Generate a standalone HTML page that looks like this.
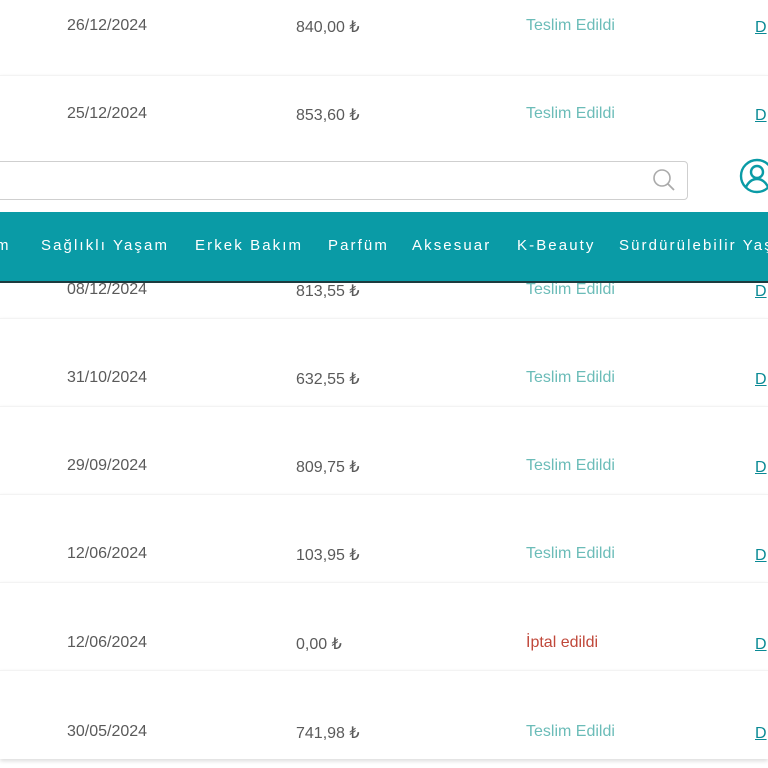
<!DOCTYPE html>
<html><head><meta charset="utf-8"><style>
body{margin:0;width:768px;height:768px;overflow:hidden;background:#fff;font-family:"Liberation Sans",sans-serif;position:relative}
.row{position:absolute;left:0;width:768px;height:88px;background:#fff;box-shadow:0 2px 4px rgba(0,0,0,.14);border-top:1px solid #f3f3f3}
.row span{position:absolute;font-size:16px;color:#5a5a5a}
.d{left:67px}.p{left:296px}.s{left:526px;color:#6bbcb8!important}.x{color:#c0483a!important;left:526px}
.l{left:755px;color:#0a8a95!important;text-decoration:underline}
.hdr{position:absolute;left:0;top:140px;width:768px;height:72px;background:#fff}
.search{position:absolute;left:-10px;top:161px;width:696px;height:37px;border:1px solid #cfcfcf;border-radius:4px;background:#fff}
.nav{position:absolute;left:0;top:212px;width:768px;height:69px;background:#0a9ba6;border-bottom:2px solid #1d3b3e}
.nav span{position:absolute;top:25px;color:#fff;font-size:15px;letter-spacing:2.1px;white-space:nowrap}
</style></head><body>
<div class="row" style="top:-12px"><span class="d" style="top:28px">26/12/2024</span><span class="p" style="top:28px">840,00 ₺</span><span class="s" style="top:28px">Teslim Edildi</span><span class="l" style="top:30px">D</span></div>
<div class="row" style="top:75px"><span class="d" style="top:29px">25/12/2024</span><span class="p" style="top:29px">853,60 ₺</span><span class="s" style="top:29px">Teslim Edildi</span><span class="l" style="top:31px">D</span></div>
<div class="row" style="top:230px"><span class="d" style="top:50px">08/12/2024</span><span class="p" style="top:50px">813,55 ₺</span><span class="s" style="top:50px">Teslim Edildi</span><span class="l" style="top:52px">D</span></div>
<div class="row" style="top:318px"><span class="d" style="top:50px">31/10/2024</span><span class="p" style="top:50px">632,55 ₺</span><span class="s" style="top:50px">Teslim Edildi</span><span class="l" style="top:52px">D</span></div>
<div class="row" style="top:406px"><span class="d" style="top:50px">29/09/2024</span><span class="p" style="top:50px">809,75 ₺</span><span class="s" style="top:50px">Teslim Edildi</span><span class="l" style="top:52px">D</span></div>
<div class="row" style="top:494px"><span class="d" style="top:50px">12/06/2024</span><span class="p" style="top:50px">103,95 ₺</span><span class="s" style="top:50px">Teslim Edildi</span><span class="l" style="top:52px">D</span></div>
<div class="row" style="top:582px"><span class="d" style="top:51px">12/06/2024</span><span class="p" style="top:51px">0,00 ₺</span><span class="x" style="top:51px">İptal edildi</span><span class="l" style="top:53px">D</span></div>
<div class="row" style="top:670px"><span class="d" style="top:52px">30/05/2024</span><span class="p" style="top:52px">741,98 ₺</span><span class="s" style="top:52px">Teslim Edildi</span><span class="l" style="top:54px">D</span></div>
<div class="hdr"></div>
<div class="search"></div>
<svg style="position:absolute;left:652px;top:168px" width="24" height="24" viewBox="0 0 24 24"><circle cx="10" cy="10" r="8" fill="none" stroke="#aaa" stroke-width="1.6"/><line x1="16" y1="16" x2="22" y2="22" stroke="#aaa" stroke-width="1.8"/></svg>
<svg style="position:absolute;left:739px;top:158px" width="40" height="40" viewBox="0 0 40 40"><circle cx="18" cy="18" r="16" fill="none" stroke="#0a9ba6" stroke-width="2.4"/><circle cx="18" cy="14" r="6" fill="none" stroke="#0a9ba6" stroke-width="2.4"/><path d="M7 29c3-6 7-8 11-8s8 2 11 8" fill="none" stroke="#0a9ba6" stroke-width="2.4"/></svg>
<div class="nav">
<span style="left:-4px">m</span>
<span style="left:41px">Sağlıklı Yaşam</span>
<span style="left:195px">Erkek Bakım</span>
<span style="left:328px">Parfüm</span>
<span style="left:412px">Aksesuar</span>
<span style="left:517px">K-Beauty</span>
<span style="left:619px">Sürdürülebilir Yaşam</span>
</div>
</body></html>
